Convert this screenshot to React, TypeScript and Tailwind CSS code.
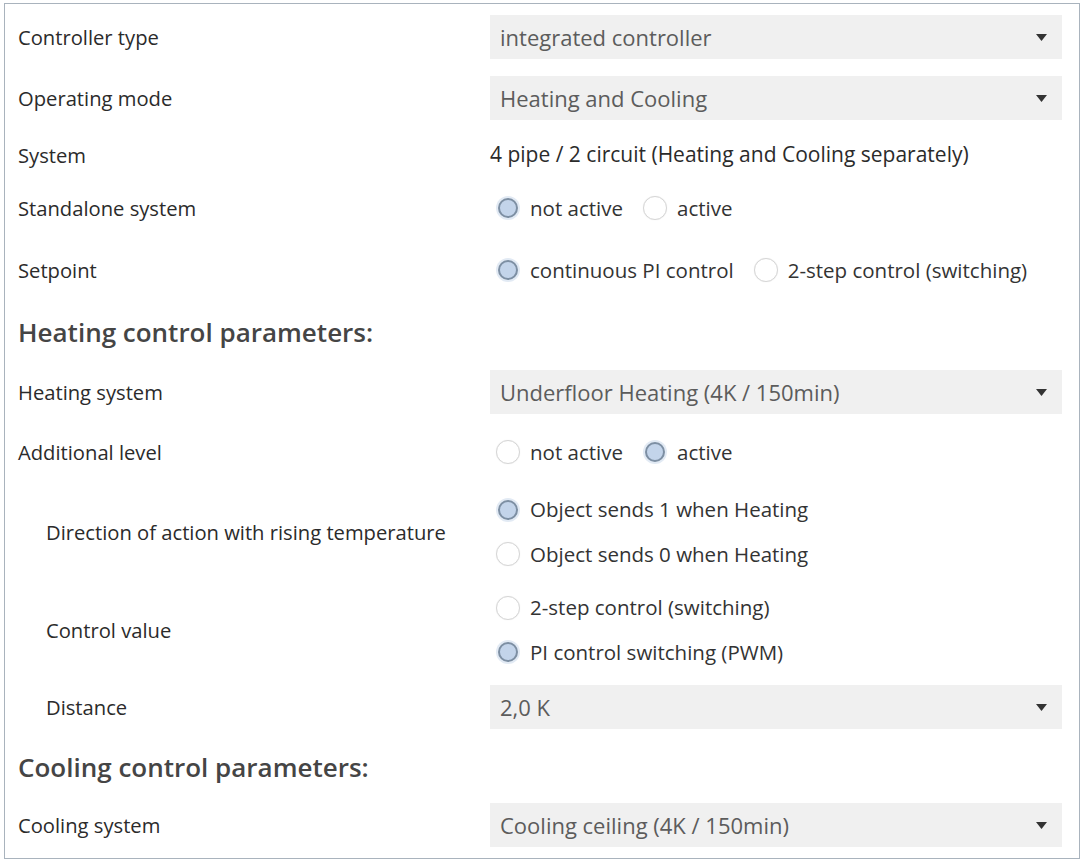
import React from "react";

type Opt = { label: string; checked?: boolean };

const Radio = ({ label, checked }: Opt) => (
  <div className="flex items-center gap-[10px]">
    {checked ? (
      <span className="flex h-[24px] w-[24px] items-center justify-center rounded-full bg-[#e2eaf4]">
        <span className="h-[20px] w-[20px] rounded-full border-2 border-[#7d8fa3] bg-[#c3d4ea]" />
      </span>
    ) : (
      <span className="h-[24px] w-[24px] rounded-full border border-[#d6d6d6] bg-white shadow-[0_0_1px_#e5e5e5]" />
    )}
    <span className="text-[20.5px] text-[#333]">{label}</span>
  </div>
);

const Dropdown = ({ value }: { value: string }) => (
  <div className="flex h-[44px] w-[572px] items-center justify-between bg-[#f0f0f0] pl-[10px] pr-[15px] text-[22px] text-[#5c5c5c]">
    <span>{value}</span>
    <svg width="11" height="7" viewBox="0 0 11 7">
      <path d="M0 0 L11 0 L5.5 7 Z" fill="#333" />
    </svg>
  </div>
);

const Row = ({
  label,
  h,
  indent,
  children,
}: {
  label: string;
  h: string;
  indent?: boolean;
  children: React.ReactNode;
}) => (
  <div className={`flex items-center ${h}`}>
    <div className={`w-[485px] shrink-0 text-[#2b2b2b] ${indent ? "pl-[41px]" : "pl-[13px]"}`}>{label}</div>
    <div className="flex-1">{children}</div>
  </div>
);

const Heading = ({ text, h }: { text: string; h: string }) => (
  <div className={`flex items-center pl-[13px] text-[26px] font-semibold text-[#454545] ${h}`}>{text}</div>
);

export default function App() {
  return (
    <div className="h-[862px] w-[1084px] bg-white pt-[3px] pl-[4px]" style={{ fontFamily: '"Open Sans", sans-serif' }}>
      <div className="w-[1076px] border border-[#a9b3bd] text-[20.2px]">
        <Row label="Controller type" h="h-[66px]">
          <Dropdown value="integrated controller" />
        </Row>
        <Row label="Operating mode" h="h-[56px]">
          <Dropdown value="Heating and Cooling" />
        </Row>
        <Row label="System" h="h-[58px]">
          <span className="text-[21px] text-[#2b2b2b]">4 pipe / 2 circuit (Heating and Cooling separately)</span>
        </Row>
        <Row label="Standalone system" h="h-[48px]">
          <div className="flex items-center gap-[20px] pl-[6px]">
            <Radio label="not active" checked />
            <Radio label="active" />
          </div>
        </Row>
        <Row label="Setpoint" h="h-[76px]">
          <div className="flex items-center gap-[20px] pl-[6px]">
            <Radio label="continuous PI control" checked />
            <Radio label="2-step control (switching)" />
          </div>
        </Row>
        <Heading text="Heating control parameters:" h="h-[48px]" />
        <Row label="Heating system" h="h-[72px]">
          <Dropdown value="Underfloor Heating (4K / 150min)" />
        </Row>
        <Row label="Additional level" h="h-[48px]">
          <div className="flex items-center gap-[20px] pl-[6px]">
            <Radio label="not active" />
            <Radio label="active" checked />
          </div>
        </Row>
        <Row label="Direction of action with rising temperature" h="h-[112px]" indent>
          <div className="flex flex-col gap-[14px] pl-[6px]">
            <Radio label="Object sends 1 when Heating" checked />
            <Radio label="Object sends 0 when Heating" />
          </div>
        </Row>
        <Row label="Control value" h="h-[84px]" indent>
          <div className="flex flex-col gap-[14px] pl-[6px]">
            <Radio label="2-step control (switching)" />
            <Radio label="PI control switching (PWM)" checked />
          </div>
        </Row>
        <Row label="Distance" h="h-[70px]" indent>
          <Dropdown value="2,0 K" />
        </Row>
        <Heading text="Cooling control parameters:" h="h-[50px]" />
        <Row label="Cooling system" h="h-[66px]">
          <Dropdown value="Cooling ceiling (4K / 150min)" />
        </Row>
      </div>
    </div>
  );
}
